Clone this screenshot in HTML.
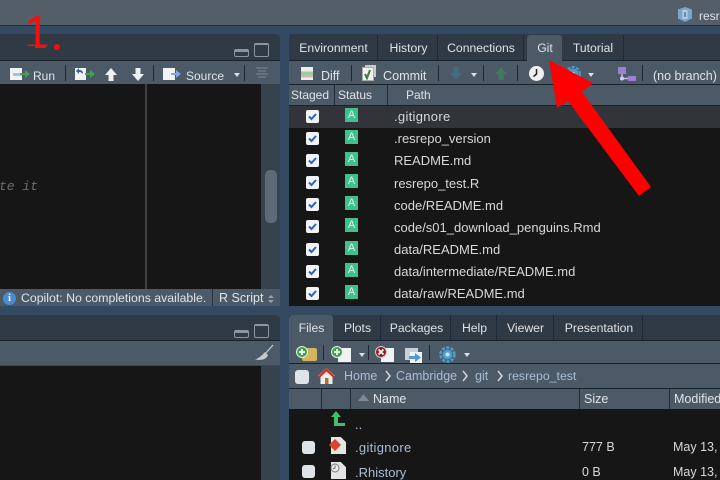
<!DOCTYPE html>
<html><head><meta charset="utf-8"><style>
html,body{margin:0;padding:0;background:#344a63}
#r{position:relative;width:720px;height:480px;overflow:hidden;background:#344a63;font-family:"Liberation Sans",sans-serif;color:#e0e4e8;font-size:12.5px}
.a{position:absolute}
.t{position:absolute;white-space:nowrap;line-height:16px}
.tab{position:absolute;top:0;height:25px;background:#303a45;border-right:1px solid #1c2a3a;text-align:center;line-height:26px;color:#dfe3e7;font-size:12.2px;box-sizing:border-box;padding-left:1px}
.on{background:#4c5966}
.cb{position:absolute;width:13px;height:13px;background:#f1f3f6;border-radius:2px}
.cb svg{position:absolute;left:1px;top:1px}
.grey{position:absolute;width:14px;height:14px;background:#dfe2e6;border-radius:3px}
.A{position:absolute;width:13px;height:14px;background:#3fc18f;color:#e4f7ee;font-size:11px;line-height:14px;text-align:center}
.sep{position:absolute;width:1px;background:#1c2733}
.p{position:absolute;left:394px;white-space:nowrap;font-size:13px;line-height:16px;color:#d6d9dc}
.h{position:absolute;top:85px;height:20px;background:#4c5966;border-right:1px solid #1c2a3a;box-sizing:border-box;line-height:21px;padding-left:4px;font-size:12px}
.w{position:absolute;background:#f0f2f4}
</style></head><body><div id="r">
<!-- top bar -->
<div class="a" style="left:0;top:0;width:720px;height:25px;background:#535e69"></div>
<div class="a" style="left:0;top:25px;width:720px;height:1px;background:#1e2d3f"></div>
<svg class="a" style="left:676px;top:6px" width="18" height="17"><path d="M9 1l7 2.500v9L9 16l-7-3.500v-9z" fill="#7ba6cc"/><path d="M6.500 4h5v9h-5z" fill="#b4cbe0"/><path d="M8 6h2v5H8z" fill="#5f8bb3"/></svg>
<div class="t" style="left:699px;top:8px;font-size:12px">resrepo_test</div>

<!-- upper left pane -->
<div class="a" style="left:0;top:34px;width:280px;height:26px;background:#303a45;border-radius:0 4px 0 0"></div>
<div class="a" style="left:0;top:60px;width:280px;height:1px;background:#18222d"></div>
<div class="a" style="left:0;top:61px;width:280px;height:23px;background:#4c5966"></div>
<div class="a" style="left:0;top:84px;width:280px;height:205px;background:#161616"></div>
<div class="a" style="left:145px;top:84px;width:2px;height:205px;background:#404040"></div>
<div class="a" style="left:261px;top:84px;width:19px;height:205px;background:#38424d"></div>
<div class="a" style="left:265px;top:170px;width:12px;height:53px;background:#5e6a78;border-radius:5px"></div>
<div class="t" style="left:-1px;top:179px;font:italic 13px/16px 'Liberation Mono',monospace;color:#6f6c68">te it</div>
<div class="a" style="left:0;top:289px;width:280px;height:17px;background:#4c5966"></div>
<div class="sep" style="left:212px;top:289px;height:17px;background:#26323f"></div>
<div class="a" style="left:3px;top:292px;width:13px;height:13px;border-radius:50%;background:#4a8bd0;color:#fff;font:bold 10px/13px 'Liberation Serif',serif;text-align:center">i</div>
<div class="t" style="left:21px;top:290px;font-size:12.3px">Copilot: No completions available.</div>
<div class="t" style="left:219px;top:290px;font-size:12.5px">R Script</div>
<svg class="a" style="left:267px;top:294px" width="8" height="10"><path d="M1 4l3-3 3 3zM1 6l3 3 3-3z" fill="#9aa3ad"/></svg>

<!-- window icons left -->
<div class="a" style="left:234px;top:49px;width:15px;height:8px;border:1px solid #8b96a1;box-sizing:border-box;border-top-width:3px;border-radius:2px"></div>
<div class="a" style="left:254px;top:43px;width:15px;height:14px;border:1px solid #8b96a1;box-sizing:border-box;border-top-width:2px;border-radius:2px"></div>

<!-- left toolbar -->
<div class="w" style="left:10px;top:68px;width:12px;height:12px"></div><div class="a" style="left:13px;top:73px;width:9px;height:3px;background:#a9c1dc"></div>
<svg class="a" style="left:20px;top:69px" width="11" height="10"><path d="M0 4h5V1l5 4-5 4V6H0z" fill="#3fa34d"/></svg>
<div class="t" style="left:33px;top:68px;font-size:12px">Run</div>
<div class="sep" style="left:65px;top:65px;height:16px"></div>
<div class="w" style="left:75px;top:68px;width:11px;height:12px"></div>
<svg class="a" style="left:75px;top:68px" width="10" height="8"><path d="M1 3l3-3v2c3 0 4 1 4 4-1-1-2-2-4-2v2z" fill="#3560a8"/></svg>
<svg class="a" style="left:85px;top:69px" width="11" height="10"><path d="M0 4h5V1l5 4-5 4V6H0z" fill="#3fa34d"/></svg>
<svg class="a" style="left:104px;top:67px" width="14" height="15"><path d="M7 1l6 7H9.500v6h-5V8H1z" fill="#eef0f2"/></svg>
<svg class="a" style="left:131px;top:67px" width="14" height="15"><path d="M7 14l6-7H9.500V1h-5v6H1z" fill="#eef0f2"/></svg>
<div class="sep" style="left:153px;top:65px;height:16px"></div>
<div class="w" style="left:163px;top:68px;width:12px;height:12px"></div>
<svg class="a" style="left:171px;top:69px" width="11" height="10"><path d="M0 4h5V1l5 4-5 4V6H0z" fill="#7ea9dc"/></svg>
<div class="t" style="left:186px;top:68px;font-size:12px">Source</div>
<svg class="a" style="left:233px;top:73px" width="8" height="5"><path d="M1 0h6L4 4z" fill="#dde"/></svg>
<div class="sep" style="left:244px;top:65px;height:16px"></div>
<svg class="a" style="left:255px;top:67px" width="14" height="12"><path d="M1 1h12M3 4h8M1 7h12M3 10h8" stroke="#6e7883" stroke-width="1.500"/></svg>

<!-- lower left -->
<div class="a" style="left:0;top:315px;width:280px;height:25px;background:#303a45;border-radius:0 4px 0 0"></div>
<div class="a" style="left:0;top:340px;width:280px;height:1px;background:#18222d"></div>
<div class="a" style="left:0;top:341px;width:280px;height:24px;background:#4c5966"></div>
<div class="a" style="left:0;top:366px;width:280px;height:114px;background:#161616"></div>
<div class="a" style="left:261px;top:366px;width:19px;height:114px;background:#38424d"></div>
<div class="a" style="left:234px;top:330px;width:15px;height:8px;border:1px solid #8b96a1;box-sizing:border-box;border-top-width:3px;border-radius:2px"></div>
<div class="a" style="left:254px;top:324px;width:15px;height:14px;border:1px solid #8b96a1;box-sizing:border-box;border-top-width:2px;border-radius:2px"></div>
<svg class="a" style="left:253px;top:344px" width="22" height="19"><path d="M20 1l-8 9" stroke="#c4c9ce" stroke-width="1.200"/><path d="M12 8l3 3c-1 3-4 5-9 5l-4-.500c3-1 6-3 10-7.500z" fill="#c4c9ce"/></svg>

<!-- right upper -->
<div class="a" style="left:289px;top:34px;width:431px;height:26px;background:#303a45"></div>
<div class="a" style="left:289px;top:35px;width:431px;height:25px">
<div class="tab" style="left:0;width:89px;border-radius:4px 0 0 0">Environment</div>
<div class="tab" style="left:90px;width:59px">History</div>
<div class="tab" style="left:149px;width:86px">Connections</div>
<div class="tab on" style="left:238px;width:35px;border-radius:3px 3px 0 0;border:0">Git</div>
<div class="tab" style="left:273px;width:62px">Tutorial</div>
</div>
<div class="a" style="left:289px;top:60px;width:431px;height:1px;background:#18222d"></div>
<div class="a" style="left:527px;top:59px;width:35px;height:3px;background:#4c5966"></div>
<div class="a" style="left:289px;top:61px;width:431px;height:23px;background:#4c5966"></div>
<div class="a" style="left:289px;top:84px;width:431px;height:1px;background:#18222d"></div>

<div class="a" style="left:301px;top:67px;width:12px;height:13px;background:linear-gradient(#eee 0 35%,#9fc99f 35% 60%,#d8b7a8 60% 80%,#eee 80%)"></div>
<div class="t" style="left:321px;top:68px;font-size:12.5px">Diff</div>
<div class="sep" style="left:351px;top:65px;height:16px"></div>
<div class="a" style="left:365px;top:65px;width:11px;height:12px;background:#c8cdd2"></div>
<div class="w" style="left:362px;top:67px;width:12px;height:14px;border:1px solid #aaa;box-sizing:border-box"></div>
<svg class="a" style="left:362px;top:68px" width="12" height="12"><path d="M3 6l2 4 3-8" stroke="#3c7f2e" stroke-width="2" fill="none"/></svg>
<div class="t" style="left:383px;top:68px;font-size:12.6px">Commit</div>
<div class="sep" style="left:438px;top:65px;height:16px"></div>
<svg class="a" style="left:449px;top:66px" width="14" height="15"><path d="M7 14l6-7H9.500V1h-5v6H1z" fill="#3f6f80"/></svg>
<svg class="a" style="left:470px;top:73px" width="8" height="5"><path d="M1 0h6L4 4z" fill="#dde"/></svg>
<div class="sep" style="left:483px;top:65px;height:16px"></div>
<svg class="a" style="left:494px;top:66px" width="14" height="15"><path d="M7 1l6 7H9.500v6h-5V8H1z" fill="#3d7a5e"/></svg>
<div class="sep" style="left:517px;top:65px;height:16px"></div>
<div class="a" style="left:529px;top:66px;width:15px;height:15px;border-radius:50%;background:#f0f0f0"></div>
<svg class="a" style="left:529px;top:66px" width="15" height="15"><path d="M7.500 3v5l-3 2.500" stroke="#222" stroke-width="1.500" fill="none"/></svg>
<svg class="a" style="left:565px;top:66px" width="16" height="16"><circle cx="8" cy="8" r="7" fill="none" stroke="#4b9fd0" stroke-width="2" stroke-dasharray="3 1.500"/><circle cx="8" cy="8" r="5.500" fill="#4b9fd0"/><circle cx="8" cy="8" r="2" fill="#cfe4f3"/></svg>
<svg class="a" style="left:587px;top:73px" width="8" height="5"><path d="M1 0h6L4 4z" fill="#dde"/></svg>
<svg class="a" style="left:617px;top:65px" width="20" height="18"><rect x="1" y="2" width="8" height="7" fill="#9b7fd1"/><rect x="11" y="11" width="8" height="5" fill="#9b7fd1"/><path d="M5 9v4.500h6" stroke="#cbbce8" stroke-width="1.500" fill="none"/><circle cx="5" cy="13.500" r="2" fill="#d8cdf0"/></svg>
<div class="sep" style="left:642px;top:65px;height:16px"></div>
<div class="t" style="left:653px;top:68px;font-size:12.5px">(no branch)</div>

<div class="h" style="left:289px;width:46px;padding-left:2px">Staged</div>
<div class="h" style="left:335px;width:53px;padding-left:3px">Status</div>
<div class="h" style="left:388px;width:332px;padding-left:18px;border:0">Path</div>
<div class="a" style="left:289px;top:105px;width:431px;height:1px;background:#18222d"></div>

<div class="a" style="left:289px;top:106px;width:431px;height:200px;background:#161616"></div>
<div class="a" style="left:289px;top:106px;width:431px;height:22px;background:#31353a"></div>

<div class="cb" style="left:306px;top:110px"><svg width="11" height="11"><path d="M2 5.500l2.500 2.500L9 3" stroke="#2a63b8" stroke-width="2" fill="none"/></svg></div><div class="A" style="left:345px;top:108px">A</div><div class="p" style="top:109px;letter-spacing:.3px">.gitignore</div>
<div class="cb" style="left:306px;top:132px"><svg width="11" height="11"><path d="M2 5.500l2.500 2.500L9 3" stroke="#2a63b8" stroke-width="2" fill="none"/></svg></div><div class="A" style="left:345px;top:130px">A</div><div class="p" style="top:131px">.resrepo_version</div>
<div class="cb" style="left:306px;top:154px"><svg width="11" height="11"><path d="M2 5.500l2.500 2.500L9 3" stroke="#2a63b8" stroke-width="2" fill="none"/></svg></div><div class="A" style="left:345px;top:152px">A</div><div class="p" style="top:153px">README.md</div>
<div class="cb" style="left:306px;top:176px"><svg width="11" height="11"><path d="M2 5.500l2.500 2.500L9 3" stroke="#2a63b8" stroke-width="2" fill="none"/></svg></div><div class="A" style="left:345px;top:174px">A</div><div class="p" style="top:176px">resrepo_test.R</div>
<div class="cb" style="left:306px;top:198px"><svg width="11" height="11"><path d="M2 5.500l2.500 2.500L9 3" stroke="#2a63b8" stroke-width="2" fill="none"/></svg></div><div class="A" style="left:345px;top:196px">A</div><div class="p" style="top:198px">code/README.md</div>
<div class="cb" style="left:306px;top:220px"><svg width="11" height="11"><path d="M2 5.500l2.500 2.500L9 3" stroke="#2a63b8" stroke-width="2" fill="none"/></svg></div><div class="A" style="left:345px;top:218px">A</div><div class="p" style="top:220px">code/s01_download_penguins.Rmd</div>
<div class="cb" style="left:306px;top:243px"><svg width="11" height="11"><path d="M2 5.500l2.500 2.500L9 3" stroke="#2a63b8" stroke-width="2" fill="none"/></svg></div><div class="A" style="left:345px;top:241px">A</div><div class="p" style="top:242px">data/README.md</div>
<div class="cb" style="left:306px;top:265px"><svg width="11" height="11"><path d="M2 5.500l2.500 2.500L9 3" stroke="#2a63b8" stroke-width="2" fill="none"/></svg></div><div class="A" style="left:345px;top:263px">A</div><div class="p" style="top:264px">data/intermediate/README.md</div>
<div class="cb" style="left:306px;top:287px"><svg width="11" height="11"><path d="M2 5.500l2.500 2.500L9 3" stroke="#2a63b8" stroke-width="2" fill="none"/></svg></div><div class="A" style="left:345px;top:285px">A</div><div class="p" style="top:286px">data/raw/README.md</div>

<!-- right lower -->
<div class="a" style="left:289px;top:315px;width:431px;height:25px;background:#303a45"></div>
<div class="a" style="left:289px;top:315px;width:431px;height:25px">
<div class="tab on" style="left:0;width:44px;border-radius:4px 3px 0 0;border:0">Files</div>
<div class="tab" style="left:44px;width:48px;padding-left:2px">Plots</div>
<div class="tab" style="left:92px;width:70px;padding-left:2px">Packages</div>
<div class="tab" style="left:162px;width:46px;padding-left:2px">Help</div>
<div class="tab" style="left:208px;width:57px">Viewer</div>
<div class="tab" style="left:265px;width:89px;padding-left:2px">Presentation</div>
</div>
<div class="a" style="left:333px;top:340px;width:387px;height:1px;background:#18222d"></div>
<div class="a" style="left:289px;top:340px;width:44px;height:1px;background:#4c5966"></div>
<div class="a" style="left:289px;top:341px;width:431px;height:22px;background:#4c5966"></div>
<div class="a" style="left:289px;top:363px;width:431px;height:1px;background:#18222d"></div>
<div class="a" style="left:289px;top:364px;width:431px;height:24px;background:#4c5966"></div>
<div class="a" style="left:289px;top:388px;width:431px;height:1px;background:#18222d"></div>

<div class="a" style="left:302px;top:348px;width:15px;height:13px;background:#d4b45c;border-radius:2px"></div>
<svg class="a" style="left:296px;top:346px" width="12" height="12"><circle cx="6" cy="6" r="5.500" fill="#3fa34d" stroke="#e5efe5"/><path d="M6 3v6M3 6h6" stroke="#fff" stroke-width="1.800"/></svg>
<div class="sep" style="left:323px;top:345px;height:15px"></div>
<div class="w" style="left:338px;top:348px;width:13px;height:14px"></div>
<svg class="a" style="left:331px;top:346px" width="12" height="12"><circle cx="6" cy="6" r="5.500" fill="#3fa34d" stroke="#e5efe5"/><path d="M6 3v6M3 6h6" stroke="#fff" stroke-width="1.800"/></svg>
<svg class="a" style="left:358px;top:353px" width="8" height="5"><path d="M1 0h6L4 4z" fill="#dde"/></svg>
<div class="sep" style="left:368px;top:345px;height:15px"></div>
<div class="w" style="left:381px;top:348px;width:13px;height:14px"></div>
<svg class="a" style="left:375px;top:346px" width="12" height="12"><circle cx="6" cy="6" r="5.500" fill="#8a2020" stroke="#d8c8c8"/><path d="M3.500 3.500l5 5M8.500 3.500l-5 5" stroke="#fff" stroke-width="1.800"/></svg>
<div class="w" style="left:405px;top:348px;width:13px;height:12px;background:#c9d0d8"></div>
<div class="w" style="left:410px;top:352px;width:12px;height:11px"></div>
<svg class="a" style="left:408px;top:353px" width="14" height="9"><path d="M1 3h6V0l6 4.500L7 9V6H1z" fill="#4f9ad8"/></svg>
<div class="sep" style="left:429px;top:345px;height:15px"></div>
<svg class="a" style="left:439px;top:346px" width="17" height="17"><circle cx="8.500" cy="8.500" r="7" fill="none" stroke="#4b9fd0" stroke-width="2.500" stroke-dasharray="3 1.500"/><circle cx="8.500" cy="8.500" r="5" fill="#4b9fd0"/><circle cx="8.500" cy="8.500" r="2" fill="#cfe4f3"/></svg>
<svg class="a" style="left:463px;top:353px" width="8" height="5"><path d="M1 0h6L4 4z" fill="#dde"/></svg>

<div class="grey" style="left:295px;top:370px"></div>
<svg class="a" style="left:317px;top:367px" width="19" height="18"><path d="M9.500 1L1 9h2.500v8h12V9H18z" fill="#f0eee8"/><path d="M9.500 1L1 9.500 2.500 11l7-6.500 7 6.500L18 9.500z" fill="#c8322a"/><rect x="8" y="11" width="3.500" height="6" fill="#a8703c"/></svg>
<div class="t" style="left:344px;top:368px;font-size:12.5px;color:#a9bed6">Home</div>
<svg class="a" style="left:385px;top:370px" width="7" height="12"><path d="M1 1l4 5-4 5" stroke="#d0d5da" stroke-width="1.500" fill="none"/></svg>
<div class="t" style="left:396px;top:368px;font-size:12.5px;color:#a9bed6">Cambridge</div>
<svg class="a" style="left:462px;top:370px" width="7" height="12"><path d="M1 1l4 5-4 5" stroke="#d0d5da" stroke-width="1.500" fill="none"/></svg>
<div class="t" style="left:475px;top:368px;font-size:12.5px;color:#a9bed6">git</div>
<svg class="a" style="left:497px;top:370px" width="7" height="12"><path d="M1 1l4 5-4 5" stroke="#d0d5da" stroke-width="1.500" fill="none"/></svg>
<div class="t" style="left:508px;top:368px;font-size:12.3px;color:#a9bed6">resrepo_test</div>

<div class="h" style="left:289px;top:389px;width:33px;height:20px"></div>
<div class="h" style="left:322px;top:389px;width:29px;height:20px"></div>
<div class="h" style="left:351px;top:389px;width:229px;height:20px;padding-left:22px;font-size:12.500px;font-weight:normal">Name</div>
<svg class="a" style="left:358px;top:394px" width="12" height="8"><path d="M0 7l5.500-7L11 7z" fill="#7d8893"/></svg>
<div class="h" style="left:580px;top:389px;width:90px;height:20px;font-size:12.500px">Size</div>
<div class="h" style="left:670px;top:389px;width:50px;height:20px;font-size:12.500px;border:0">Modified</div>
<div class="a" style="left:289px;top:409px;width:431px;height:71px;background:#161616"></div>

<svg class="a" style="left:330px;top:411px" width="16" height="17"><path d="M6 0L1 6h3v9h11v-3H8V6h3z" fill="#3fbf6a"/></svg>
<div class="t" style="left:355px;top:417px;font-size:13px;color:#a9bed6">..</div>
<div class="grey" style="left:302px;top:441px;width:13px;height:13px"></div>
<div class="a" style="left:331px;top:437px;width:15px;height:17px;background:#e4e4e4;clip-path:polygon(0 0,65% 0,100% 30%,100% 100%,0 100%)"></div>
<svg class="a" style="left:329px;top:439px" width="12" height="12"><path d="M6 0l6 6-6 6-6-6z" fill="#d8452c"/></svg>
<div class="t" style="left:355px;top:440px;font-size:13px;color:#a9bed6;letter-spacing:.3px">.gitignore</div>
<div class="t" style="left:582px;top:439px;font-size:12.5px;color:#d6d9dc">777 B</div>
<div class="t" style="left:673px;top:439px;font-size:12.5px;color:#d6d9dc">May 13,</div>
<div class="grey" style="left:302px;top:465px;width:13px;height:13px"></div>
<div class="a" style="left:331px;top:462px;width:15px;height:17px;background:#e4e4e4;clip-path:polygon(0 0,65% 0,100% 30%,100% 100%,0 100%)"></div>
<svg class="a" style="left:330px;top:463px" width="10" height="10"><circle cx="5" cy="5" r="4" fill="#eee" stroke="#777"/><path d="M5 2.500V5l-2 1" stroke="#666" fill="none"/></svg>
<div class="t" style="left:355px;top:465px;font-size:13px;color:#a9bed6">.Rhistory</div>
<div class="t" style="left:582px;top:464px;font-size:12.5px;color:#d6d9dc">0 B</div>
<div class="t" style="left:673px;top:464px;font-size:12.5px;color:#d6d9dc">May 13,</div>

<!-- annotations -->
<div class="t" style="left:24px;top:7px;width:30px;height:50px;font-size:46px;line-height:50px;color:#fa0d0d;clip-path:polygon(0 0,100% 0,100% 39px,22px 39px,22px 50px,11px 50px,11px 39px,0 39px)">1</div>
<div class="a" style="left:54px;top:44px;width:6px;height:6px;border-radius:50%;background:#fa0d0d"></div>
<svg class="a" style="left:0;top:0" width="720" height="480"><path d="M549 60L593 83 582 92 651 187 639 196 568 101 557 108z" fill="#fe0000"/></svg>
</div></body></html>
